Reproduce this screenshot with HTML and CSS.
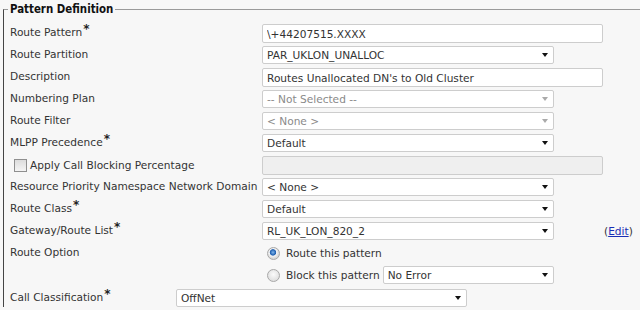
FILE: index.html
```html
<!DOCTYPE html>
<html lang="en">
<head>
    <meta charset="UTF-8">
    <title>Route Pattern Configuration</title>
    <link rel="stylesheet" href="styles.css">
</head>
<body>
    <fieldset class="pattern">
        <legend>Pattern Definition</legend>

        <div class="form-grid">
            <label class="lbl">Route Pattern<span class="req">*</span></label>
            <div class="ctl"><input type="text" class="text-field" value="\+44207515.XXXX"></div>
            <div></div>

            <label class="lbl">Route Partition</label>
            <div class="ctl"><div class="select"><span>PAR_UKLON_UNALLOC</span><i class="arrow"></i></div></div>
            <div></div>

            <label class="lbl">Description</label>
            <div class="ctl"><input type="text" class="text-field" value="Routes Unallocated DN's to Old Cluster"></div>
            <div></div>

            <label class="lbl">Numbering Plan</label>
            <div class="ctl"><div class="select disabled"><span>-- Not Selected --</span><i class="arrow"></i></div></div>
            <div></div>

            <label class="lbl">Route Filter</label>
            <div class="ctl"><div class="select disabled"><span>&lt; None &gt;</span><i class="arrow"></i></div></div>
            <div></div>

            <label class="lbl">MLPP Precedence<span class="req">*</span></label>
            <div class="ctl"><div class="select"><span>Default</span><i class="arrow"></i></div></div>
            <div></div>

            <label class="lbl check-lbl"><span class="checkbox"></span>Apply Call Blocking Percentage</label>
            <div class="ctl"><input type="text" class="text-field" disabled></div>
            <div></div>

            <label class="lbl">Resource Priority Namespace Network Domain</label>
            <div class="ctl"><div class="select"><span>&lt; None &gt;</span><i class="arrow"></i></div></div>
            <div></div>

            <label class="lbl">Route Class<span class="req">*</span></label>
            <div class="ctl"><div class="select"><span>Default</span><i class="arrow"></i></div></div>
            <div></div>

            <label class="lbl">Gateway/Route List<span class="req">*</span></label>
            <div class="ctl"><div class="select"><span>RL_UK_LON_820_2</span><i class="arrow"></i></div></div>
            <div class="edit">(<a href="#">Edit</a>)</div>

            <label class="lbl">Route Option</label>
            <div class="ctl radio-row"><span class="radio checked"></span>Route this pattern</div>
            <div></div>

            <div></div>
            <div class="ctl radio-row"><span class="radio"></span>Block this pattern
                <div class="select small"><span>No Error</span><i class="arrow"></i></div>
            </div>
            <div></div>
        </div>

        <div class="form-grid classify">
            <label class="lbl">Call Classification<span class="req">*</span></label>
            <div class="ctl"><div class="select"><span>OffNet</span><i class="arrow"></i></div></div>
        </div>
    </fieldset>
</body>
</html>
```

FILE: styles.css
```css
html, body {
    margin: 0;
    padding: 0;
    overflow: hidden;
}
body {
    font-family: "DejaVu Sans", sans-serif;
    font-size: 10.6px;
    color: #333;
    background-color: #f7f7f7;
}
.pattern {
    margin: 0 -20px 0 3px;
    padding: 0 0 0 6px;
    border: none;
    border-top: 1px solid #9a9a9a;
    border-left: 1px solid #444;
}
.pattern legend {
    margin-left: -2px;
    padding: 0 2px;
    font-family: "DejaVu Sans Condensed", "DejaVu Sans", sans-serif;
    font-weight: bold;
    font-size: 11.4px;
    line-height: 18px;
    color: #111;
}
.form-grid {
    display: grid;
    grid-template-columns: 252px 341px 1fr;
    grid-auto-rows: 18px;
    row-gap: 4px;
    padding-top: 6px;
}
.form-grid.classify {
    grid-template-columns: 166px 291px;
    padding-top: 5px;
}
.lbl {
    padding-top: 1px;
    line-height: 14px;
    white-space: nowrap;
}
.req {
    font-size: 12px;
    font-weight: bold;
    color: #222;
    vertical-align: top;
    position: relative;
    top: -3px;
    margin-left: 1px;
}
.check-lbl {
    display: flex;
    align-items: center;
    padding-top: 0;
    line-height: 18px;
}
.checkbox {
    width: 11px;
    height: 11px;
    margin: 0 3px 0 4px;
    border: 1px solid #8f8f8f;
    background: linear-gradient(#dcdcdc, #f4f4f4);
}
.ctl {
    display: flex;
    align-items: stretch;
}
.text-field {
    box-sizing: border-box;
    width: 341px;
    height: 19px;
    margin: 0;
    padding: 0 4px;
    border: 1px solid #cdcdcd;
    border-radius: 2px;
    background: #fff;
    font: inherit;
    color: #333;
}
.text-field:disabled {
    background: #efefef;
}
.select {
    box-sizing: border-box;
    width: 292px;
    height: 18px;
    padding: 0 5px 0 4px;
    border: 1px solid #cdcdcd;
    border-radius: 2px;
    background: #fff;
    display: flex;
    align-items: center;
    justify-content: space-between;
}
.select.small {
    width: 171px;
    margin-left: 3px;
}
.arrow {
    width: 0;
    height: 0;
    border-left: 3.5px solid transparent;
    border-right: 3.5px solid transparent;
    border-top: 4px solid #111;
}
.select.disabled {
    color: #8a8a8a;
}
.select.disabled .arrow {
    border-top-color: #aaa;
}
.edit {
    line-height: 18px;
    padding-left: 1px;
}
.edit a {
    color: #1a2fb5;
}
.radio-row {
    align-items: center;
}
.radio {
    box-sizing: border-box;
    width: 13px;
    height: 13px;
    margin: 0 6px 0 5px;
    border: 1px solid #a8a8a8;
    border-radius: 50%;
    background: radial-gradient(circle at 50% 40%, #fbfbfb, #d6d6d6);
}
.radio.checked {
    background: radial-gradient(circle at 45% 40%, #7fb6ec 0, #1f5fb0 2.8px, #f4f4f4 3.6px, #d8d8d8 6px);
}
```
